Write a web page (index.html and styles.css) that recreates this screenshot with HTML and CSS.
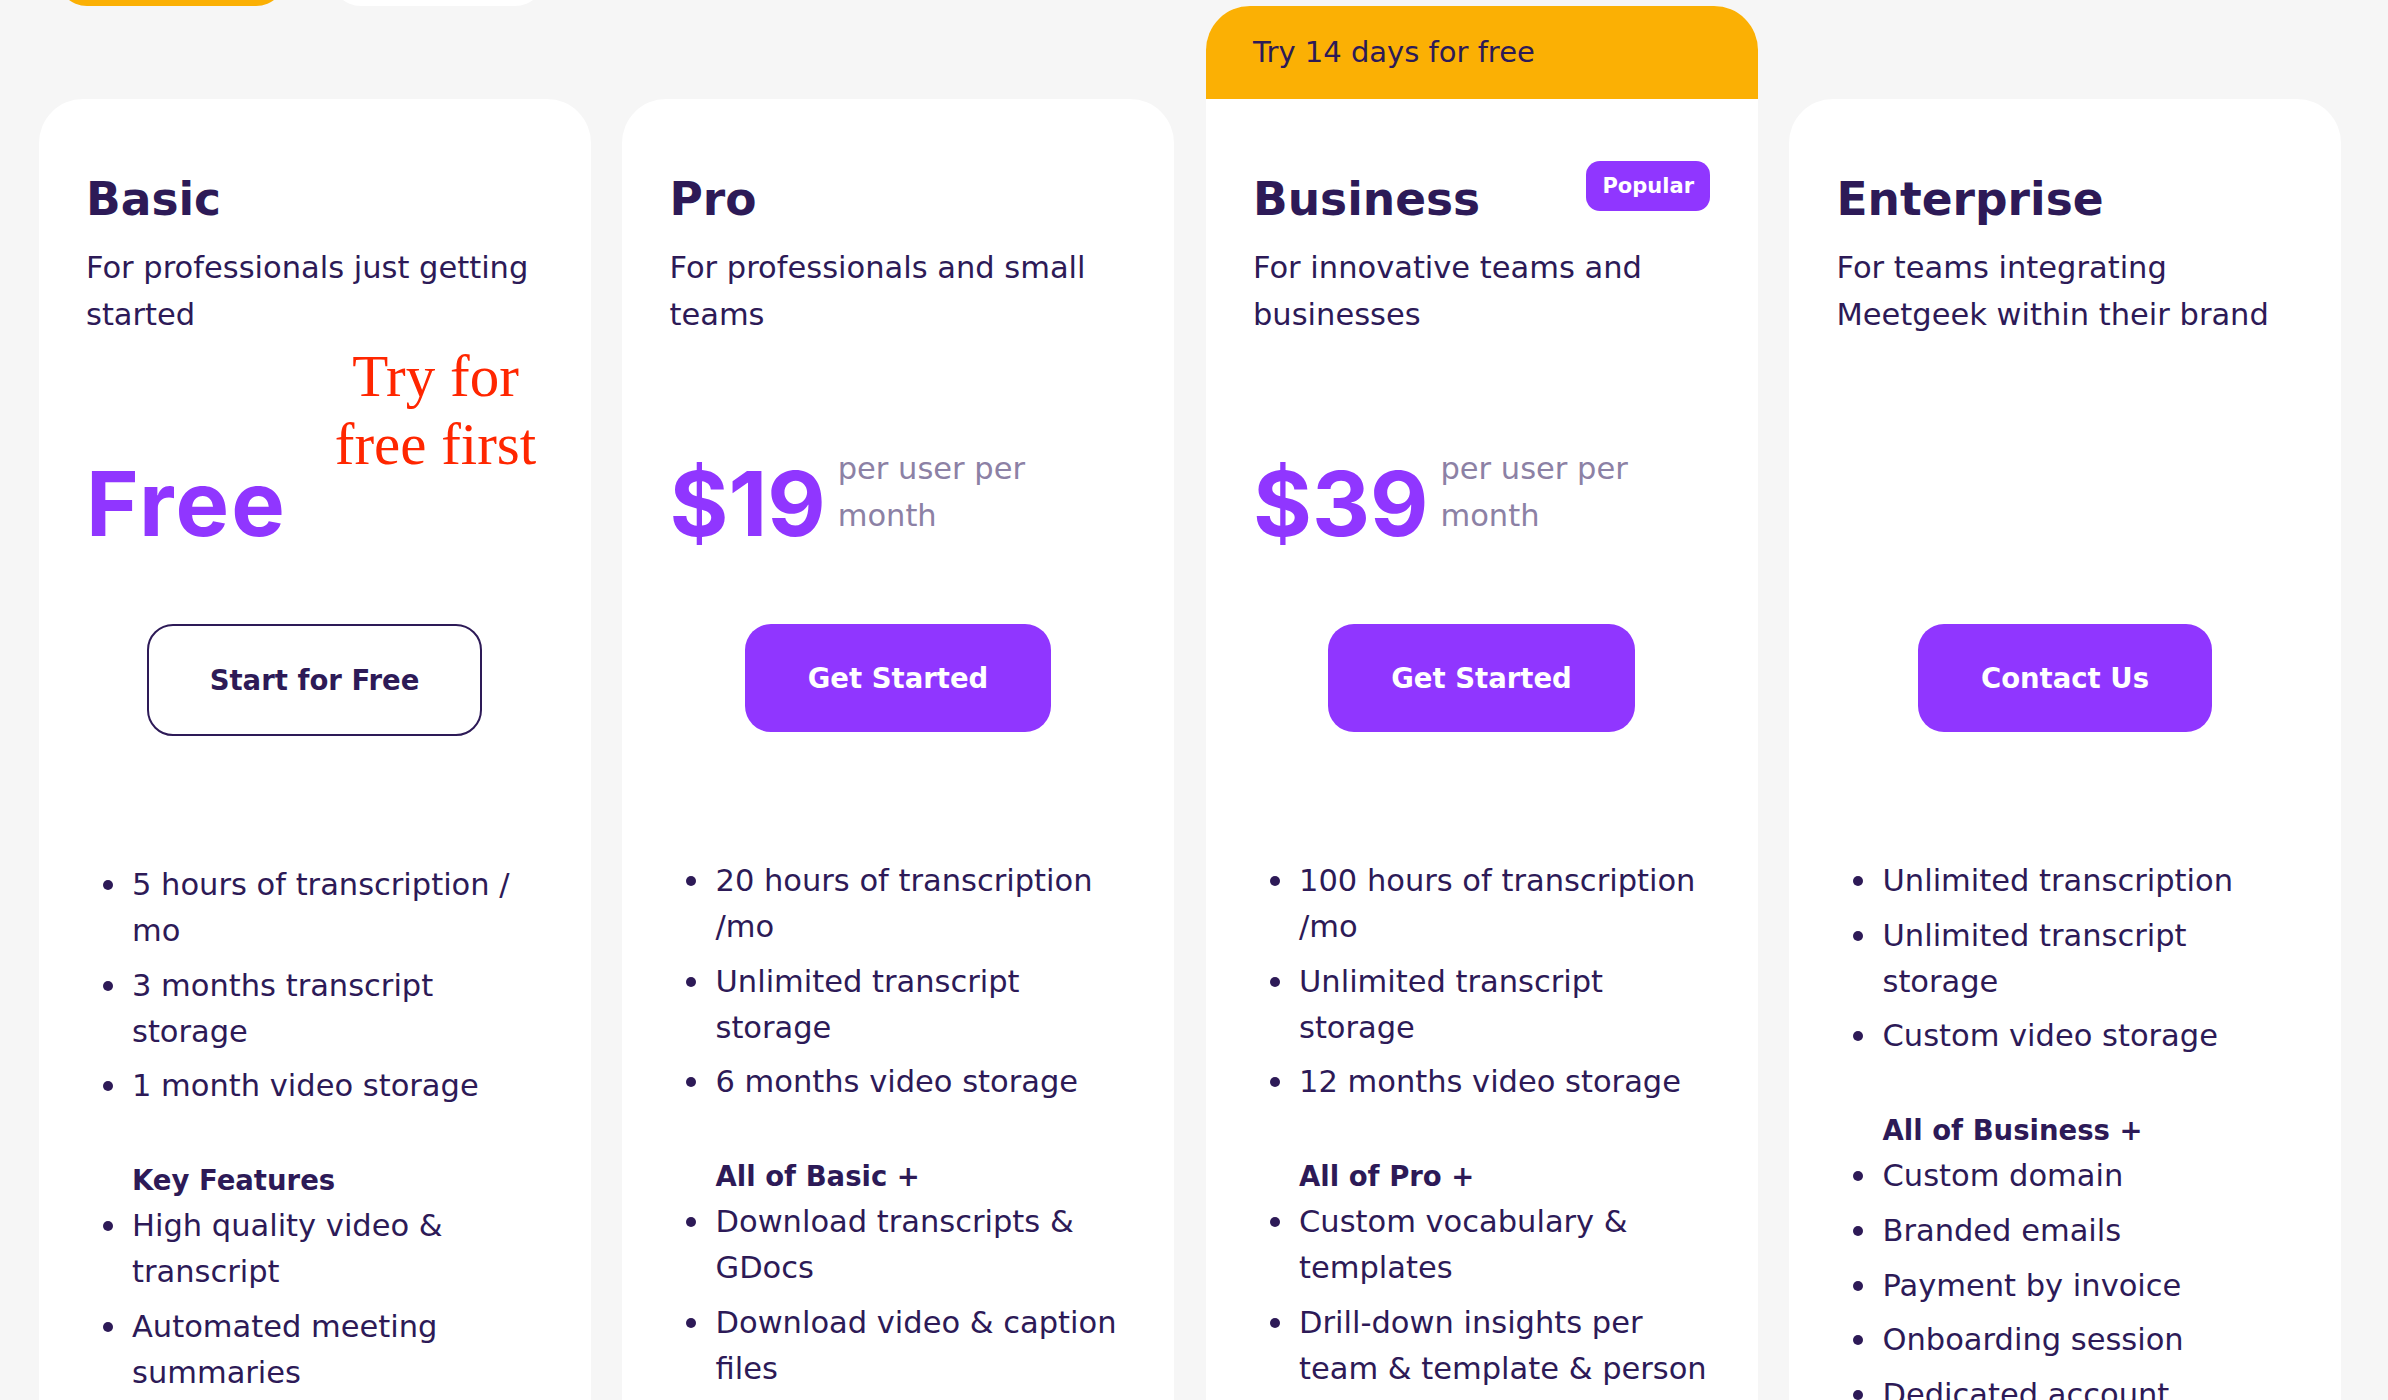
FILE: index.html
```html
<!DOCTYPE html>
<html lang="en">
<head>
<meta charset="utf-8">
<title>Pricing</title>
<link rel="stylesheet" href="styles.css">
</head>
<body>
<main class="page">
  <div class="billing-toggle">
    <span class="toggle-pill toggle-pill--active"></span>
    <span class="toggle-pill"></span>
  </div>

  <section class="plans">
    <article class="plan">
      <div class="plan-body">
        <div class="plan-head"><h2 class="plan-name">Basic</h2></div>
        <p class="plan-desc">For professionals just getting started</p>
        <div class="plan-mid">
          <p class="plan-note">Try for free first</p>
          <div class="plan-price"><span class="price price--free">Free</span></div>
        </div>
        <a class="btn btn--outline" href="#">Start for Free</a>
        <div class="plan-features">
          <ul class="feature-list">
            <li>5 hours of transcription / mo</li>
            <li>3 months transcript storage</li>
            <li>1 month video storage</li>
          </ul>
          <p class="features-title">Key Features</p>
          <ul class="feature-list">
            <li>High quality video &amp; transcript</li>
            <li>Automated meeting summaries</li>
          </ul>
        </div>
      </div>
    </article>

    <article class="plan">
      <div class="plan-body">
        <div class="plan-head"><h2 class="plan-name">Pro</h2></div>
        <p class="plan-desc">For professionals and small teams</p>
        <div class="plan-mid">
          <div class="plan-price"><span class="price">$19</span><span class="price-unit">per user per month</span></div>
        </div>
        <a class="btn" href="#">Get Started</a>
        <div class="plan-features">
          <ul class="feature-list">
            <li>20 hours of transcription /mo</li>
            <li>Unlimited transcript storage</li>
            <li>6 months video storage</li>
          </ul>
          <p class="features-title">All of Basic +</p>
          <ul class="feature-list">
            <li>Download transcripts &amp; GDocs</li>
            <li>Download video &amp; caption files</li>
          </ul>
        </div>
      </div>
    </article>

    <article class="plan plan--featured">
      <div class="plan-ribbon">Try 14 days for free</div>
      <div class="plan-body">
        <div class="plan-head"><h2 class="plan-name">Business</h2><span class="badge">Popular</span></div>
        <p class="plan-desc">For innovative teams and businesses</p>
        <div class="plan-mid">
          <div class="plan-price"><span class="price">$39</span><span class="price-unit">per user per month</span></div>
        </div>
        <a class="btn" href="#">Get Started</a>
        <div class="plan-features">
          <ul class="feature-list">
            <li>100 hours of transcription /mo</li>
            <li>Unlimited transcript storage</li>
            <li>12 months video storage</li>
          </ul>
          <p class="features-title">All of Pro +</p>
          <ul class="feature-list">
            <li>Custom vocabulary &amp; templates</li>
            <li>Drill-down insights per team &amp; template &amp; person</li>
          </ul>
        </div>
      </div>
    </article>

    <article class="plan">
      <div class="plan-body">
        <div class="plan-head"><h2 class="plan-name">Enterprise</h2></div>
        <p class="plan-desc">For teams integrating Meetgeek within their brand</p>
        <div class="plan-mid"></div>
        <a class="btn" href="#">Contact Us</a>
        <div class="plan-features">
          <ul class="feature-list">
            <li>Unlimited transcription</li>
            <li>Unlimited transcript storage</li>
            <li>Custom video storage</li>
          </ul>
          <p class="features-title">All of Business +</p>
          <ul class="feature-list">
            <li>Custom domain</li>
            <li>Branded emails</li>
            <li>Payment by invoice</li>
            <li>Onboarding session</li>
            <li>Dedicated account manager</li>
          </ul>
        </div>
      </div>
    </article>
  </section>
</main>
</body>
</html>
```

FILE: styles.css
```css
* { box-sizing: border-box; }

html, body { margin: 0; }

body {
  background: #f6f6f6;
  font-family: "DejaVu Sans", "Noto Sans", sans-serif;
  color: #2d1a57;
}

.page {
  padding: 0 47px 0 38.5px;
}

/* remnants of the billing toggle above the plans */
.billing-toggle {
  display: flex;
  gap: 45px;
  height: 60px;
  margin: -54px 0 0 18.5px;
}

.toggle-pill {
  width: 214px;
  height: 60px;
  border-radius: 30px;
  background: #ffffff;
}

.toggle-pill--active {
  width: 229px;
  background: #fbb004;
}

.plans {
  display: grid;
  grid-template-columns: repeat(4, 552px);
  column-gap: 31.5px;
  align-items: start;
}

.plan {
  margin-top: 93px;
  border-radius: 44px;
  overflow: hidden;
  background: #ffffff;
}

.plan--featured {
  margin-top: 0;
}

.plan-ribbon {
  height: 93px;
  padding: 0 47.5px;
  background: #fbb004;
  font-size: 29px;
  line-height: 93px;
  color: #2d1a57;
}

.plan-body {
  padding: 62px 47.5px 160px;
}

.plan-head {
  display: flex;
  justify-content: space-between;
  align-items: flex-start;
}

.plan-name {
  margin: 0;
  font-size: 45.5px;
  font-weight: 700;
  line-height: 78px;
}

.badge {
  padding: 0 16px;
  border-radius: 14px;
  background: #9036ff;
  color: #ffffff;
  font-size: 21px;
  font-weight: 700;
  line-height: 50px;
}

.plan-desc {
  height: 94px;
  margin: 5px 0 0;
  font-size: 30.5px;
  line-height: 47px;
}

.plan-mid {
  height: 211px;
  display: flex;
  flex-direction: column;
  justify-content: flex-end;
}

.plan-note {
  align-self: flex-end;
  width: 215px;
  margin: 0 0 -19px;
  font-family: "Liberation Serif", serif;
  font-size: 59px;
  line-height: 68px;
  color: #ff2600;
  text-align: center;
}

.plan-price {
  display: flex;
  align-items: flex-end;
  gap: 12px;
}

.price {
  font-family: Inter, "Liberation Sans", sans-serif;
  font-size: 90px;
  font-weight: 700;
  line-height: 90px;
  color: #9036ff;
}

.price--free {
  letter-spacing: 2px;
}

.price-unit {
  max-width: 200px;
  margin-bottom: 10px;
  font-size: 30.5px;
  line-height: 47px;
  color: #8c81a5;
}

.btn {
  display: block;
  width: fit-content;
  height: 108px;
  margin: 75px auto 0;
  padding: 0 63px;
  border-radius: 26px;
  background: #9036ff;
  color: #ffffff;
  font-size: 27.5px;
  font-weight: 700;
  line-height: 108px;
  text-decoration: none;
}

.btn--outline {
  height: 112px;
  padding: 0 61px;
  border: 2px solid #2d1a57;
  background: #ffffff;
  color: #2d1a57;
}

.plan-features {
  margin-top: 126px;
}

.feature-list {
  margin: 0;
  padding: 0;
  list-style: none;
}

.feature-list li {
  display: flex;
  font-size: 30.5px;
  line-height: 46px;
}

.feature-list li + li {
  margin-top: 8.7px;
}

.feature-list li::before {
  content: "";
  flex: none;
  width: 10px;
  height: 10px;
  margin: 18px 19.5px 0 16.5px;
  border-radius: 50%;
  background: currentColor;
}

.features-title {
  margin: 48px 0 0;
  padding-left: 46px;
  font-size: 27.5px;
  font-weight: 700;
  line-height: 46px;
}
```
